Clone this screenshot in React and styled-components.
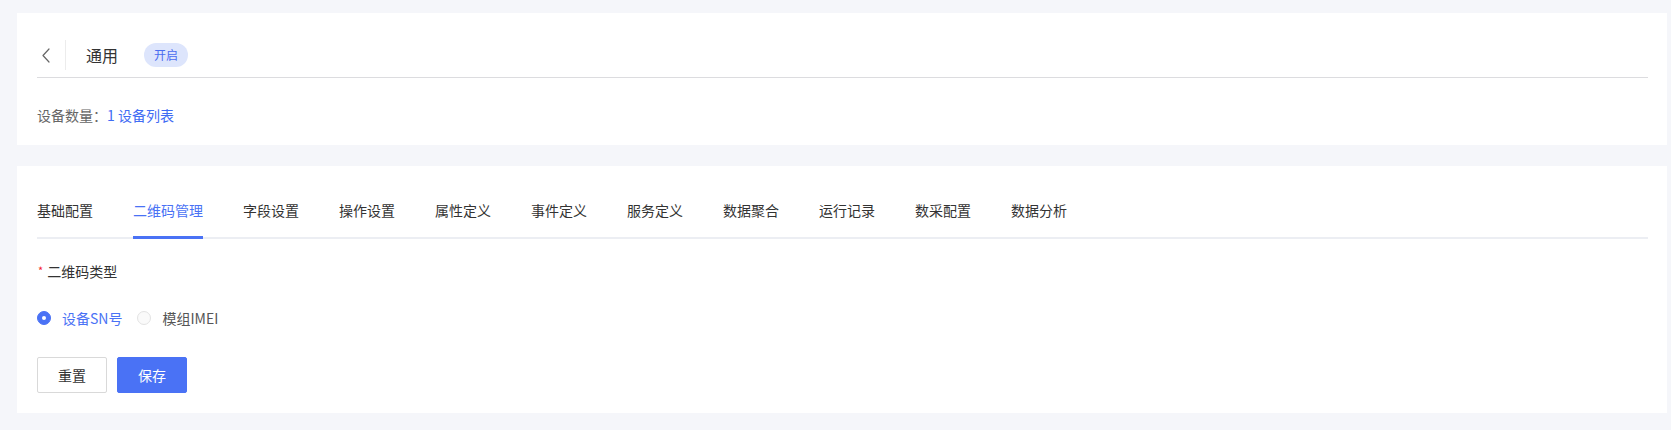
import React, { useState } from "react";
import styled, { createGlobalStyle } from "styled-components";

const GlobalStyle = createGlobalStyle`
  * { box-sizing: border-box; }
  body {
    margin: 0;
    background: #f5f6fa;
    font-family: "Noto Sans CJK SC", "Noto Sans", sans-serif;
    font-size: 14px;
    color: #333;
  }
`;

const tabs = [
  "基础配置",
  "二维码管理",
  "字段设置",
  "操作设置",
  "属性定义",
  "事件定义",
  "服务定义",
  "数据聚合",
  "运行记录",
  "数采配置",
  "数据分析",
];

const App = () => {
  const [active, setActive] = useState(1);
  const [type, setType] = useState("sn");

  return (
    <Page>
      <GlobalStyle />
      <Card className="info">
        <Header>
          <BackButton>
            <svg width="8" height="15" viewBox="0 0 8 15" fill="none">
              <polyline
                points="7,1 1,7.5 7,14"
                stroke="#666"
                strokeWidth="1.2"
                strokeLinejoin="round"
                strokeLinecap="round"
              />
            </svg>
          </BackButton>
          <Title>通用</Title>
          <Badge>开启</Badge>
        </Header>
        <Meta>
          设备数量：<MetaLink>1 设备列表</MetaLink>
        </Meta>
      </Card>

      <Card className="detail">
        <TabNav>
          {tabs.map((t, i) => (
            <Tab key={t} $active={i === active} onClick={() => setActive(i)}>
              {t}
            </Tab>
          ))}
        </TabNav>

        <Label>
          <Required>*</Required>二维码类型
        </Label>

        <RadioGroup>
          <RadioItem $checked={type === "sn"} onClick={() => setType("sn")}>
            <RadioDot $checked={type === "sn"} />
            设备SN号
          </RadioItem>
          <RadioItem $checked={type === "imei"} onClick={() => setType("imei")}>
            <RadioDot $checked={type === "imei"} />
            模组IMEI
          </RadioItem>
        </RadioGroup>

        <Actions>
          <Button>重置</Button>
          <Button $primary>保存</Button>
        </Actions>
      </Card>
    </Page>
  );
};

export default App;

const Page = styled.div`
  display: flex;
  flex-direction: column;
  gap: 21px;
  padding: 13px 4px 0 17px;
`;

const Card = styled.section`
  background: #fff;
  padding: 0 19px 0 20px;

  &.info {
    padding-top: 27px;
    padding-bottom: 19px;
  }

  &.detail {
    padding-top: 24px;
    padding-bottom: 20px;
  }
`;

const Header = styled.div`
  display: flex;
  align-items: center;
  height: 38px;
  padding-bottom: 7px;
  border-bottom: 1px solid #dcdcdf;
`;

const BackButton = styled.div`
  display: flex;
  align-items: center;
  width: 29px;
  height: 30px;
  padding-left: 5px;
  border-right: 1px solid #ececec;
  cursor: pointer;
`;

const Title = styled.span`
  margin-left: 20px;
  font-size: 16px;
  line-height: 24px;
  color: #333;
`;

const Badge = styled.span`
  margin-left: 26px;
  height: 24px;
  padding: 0 10px;
  border-radius: 12px;
  background: #dde5fc;
  color: #4a6cf0;
  font-size: 12px;
  line-height: 24px;
`;

const Meta = styled.p`
  margin: 26px 0 0;
  font-size: 14px;
  line-height: 22px;
  color: #666;
`;

const MetaLink = styled.a`
  color: #3f6cf4;
  cursor: pointer;
`;

const TabNav = styled.div`
  display: flex;
  gap: 40px;
  border-bottom: 2px solid #eceef3;
`;

const Tab = styled.div`
  position: relative;
  padding: 9px 0 16px;
  font-size: 14px;
  line-height: 22px;
  color: ${(p) => (p.$active ? "#4a72f5" : "#333")};
  cursor: pointer;

  &::after {
    content: "";
    position: absolute;
    left: 0;
    right: 0;
    bottom: -2px;
    height: 3px;
    background: ${(p) => (p.$active ? "#4a72f5" : "transparent")};
  }
`;

const Label = styled.div`
  margin-top: 21px;
  display: flex;
  align-items: center;
  font-size: 14px;
  line-height: 22px;
  color: #333;
`;

const Required = styled.span`
  margin: 5px 4px 0 1px;
  align-self: flex-start;
  color: #f5222d;
  font-size: 11px;
  line-height: 1;
`;

const RadioGroup = styled.div`
  margin-top: 25px;
  display: flex;
  align-items: center;
  gap: 15px;
`;

const RadioItem = styled.label`
  display: flex;
  align-items: center;
  gap: 11px;
  font-size: 14px;
  line-height: 22px;
  color: ${(p) => (p.$checked ? "#4a72f5" : "#555")};
  cursor: pointer;
`;

const RadioDot = styled.span`
  position: relative;
  width: 14px;
  height: 14px;
  border-radius: 50%;
  border: 1px solid ${(p) => (p.$checked ? "#4a72f5" : "#e3e3e3")};
  background: ${(p) => (p.$checked ? "#4a72f5" : "#fafafa")};

  &::after {
    content: "";
    position: absolute;
    top: 50%;
    left: 50%;
    width: 4px;
    height: 4px;
    margin: -2px 0 0 -2px;
    border-radius: 50%;
    background: ${(p) => (p.$checked ? "#fff" : "transparent")};
  }
`;

const Actions = styled.div`
  margin-top: 28px;
  display: flex;
  gap: 10px;
`;

const Button = styled.button`
  width: 70px;
  height: 36px;
  border-radius: 2px;
  border: 1px solid ${(p) => (p.$primary ? "#4a72f5" : "#d9d9d9")};
  background: ${(p) => (p.$primary ? "#4a72f5" : "#fff")};
  color: ${(p) => (p.$primary ? "#fff" : "#333")};
  font-family: inherit;
  font-size: 14px;
  cursor: pointer;
`;
